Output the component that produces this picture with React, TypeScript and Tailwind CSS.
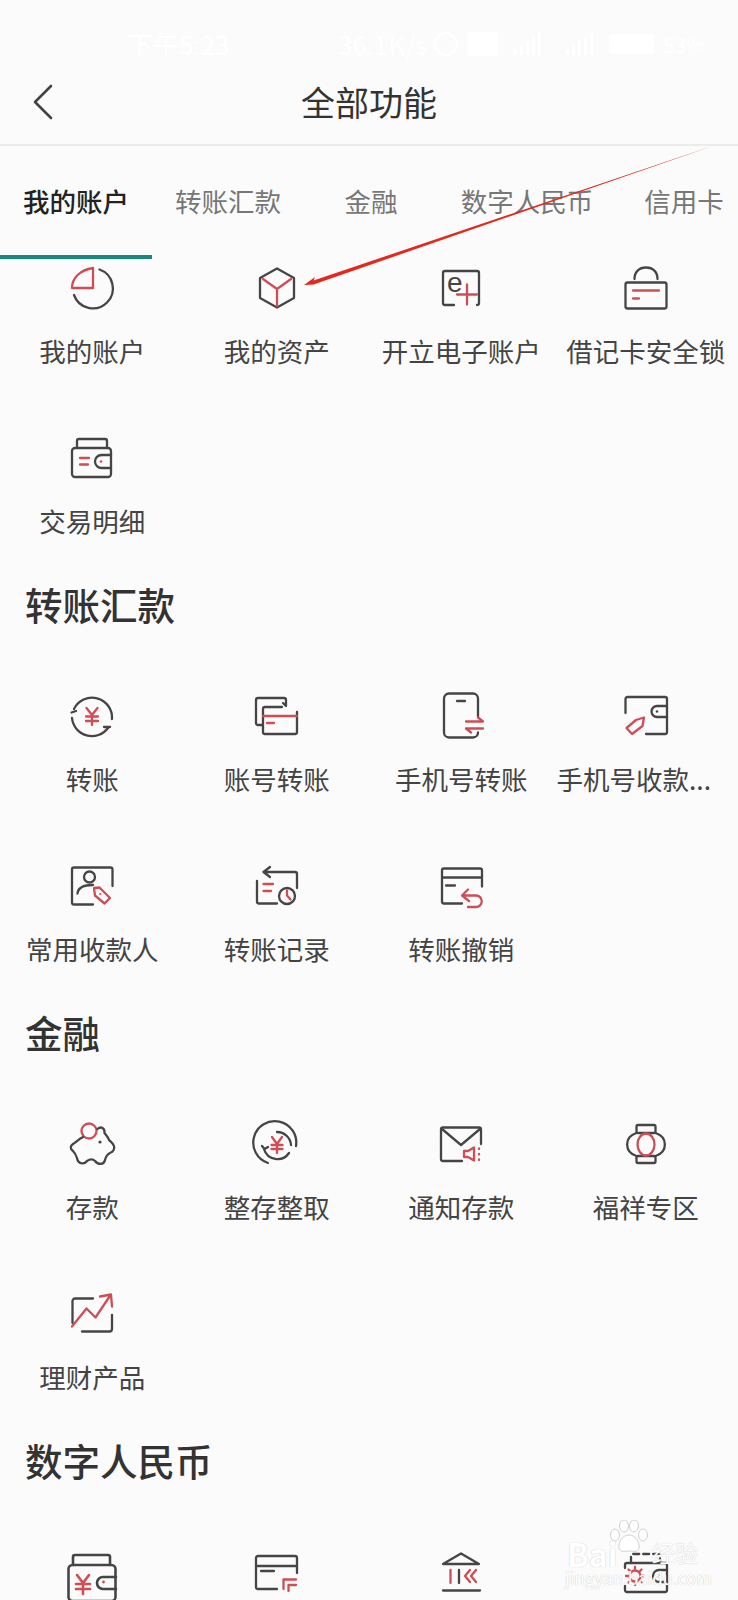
import React from "react";

const D = "#454545";
const R = "#cf4d55";

type IconProps = { children: React.ReactNode };

// every icon is drawn on a 48px box, 1:1 with the page
function Ico({ children }: IconProps) {
  return (
    <svg
      width="48"
      height="48"
      viewBox="0 0 48 48"
      fill="none"
      strokeWidth="2.3"
      strokeLinecap="round"
      strokeLinejoin="round"
      className="shrink-0 overflow-visible"
    >
      {children}
    </svg>
  );
}

const icons: Record<string, React.ReactNode> = {
  pie: (
    <Ico>
      <path d="M25 4V24H4C4 14 12 6 25 4Z" stroke={R} />
      <path d="M31.5 5.5A20 20 0 1 1 6 31" stroke={D} />
    </Ico>
  ),
  cube: (
    <Ico>
      <path d="M24 4.5L41 14V34L24 43.5L7 34V14Z" stroke={D} />
      <path d="M10 15L24 25L38 15M24 25V42" stroke={R} />
    </Ico>
  ),
  eplus: (
    <Ico>
      <path d="M17 41H8A2 2 0 0 1 6 39V9A2 2 0 0 1 8 7H40A2 2 0 0 1 42 9V39A2 2 0 0 1 40 41" stroke={D} />
      <text x="10" y="28" fontSize="28" fill={D} fontFamily="Liberation Sans, sans-serif">e</text>
      <path d="M20 30.5H40M30 20.5V40.5" stroke={R} />
    </Ico>
  ),
  lock: (
    <Ico>
      <rect x="3.5" y="18.5" width="41" height="26" rx="2" stroke={D} />
      <path d="M12.5 15C12.5 8 17 3.5 24 3.5S35.5 8 35.5 15" stroke={D} />
      <path d="M11 26.5H37M11 34.5H17" stroke={R} />
    </Ico>
  ),
  wallet: (
    <Ico>
      <path d="M9 14V7A2 2 0 0 1 11 5H37A2 2 0 0 1 39 7V14" stroke={D} />
      <rect x="4" y="14" width="39" height="29" rx="3" stroke={D} />
      <path d="M43 21H33.5A6.5 6.5 0 0 0 33.5 34H43" stroke={D} />
      <circle cx="33" cy="27.5" r="1.3" fill={R} />
      <path d="M12 24H21M12 30.5H20" stroke={R} />
    </Ico>
  ),
  yenCycle: (
    <Ico>
      <path d="M6 17A20 20 0 0 1 44 27" stroke={D} />
      <path d="M4 26A20 20 0 0 0 40 36" stroke={D} />
      <path d="M3.5 20.5L8 19M36 35H42" stroke={D} />
      <path d="M18.5 16L24 23L29.5 16M24 23V33M18 24.5H30M18 29H30" stroke={R} />
    </Ico>
  ),
  cards: (
    <Ico>
      <path d="M9 33H5A2 2 0 0 1 3 31V8A2 2 0 0 1 5 6H31A2 2 0 0 1 33 8V14L30 11" stroke={D} />
      <path d="M29 15H12A2 2 0 0 0 10 17V40A2 2 0 0 0 12 42H42A2 2 0 0 0 44 40V20" stroke={D} />
      <path d="M10 24H44M14 31H21" stroke={R} />
    </Ico>
  ),
  phone: (
    <Ico>
      <path d="M41 25V6.5A5 5 0 0 0 36 1.5H12A5 5 0 0 0 7 6.5V40.5A5 5 0 0 0 12 45.5H36A5 5 0 0 0 41 40.5" stroke={D} />
      <path d="M20 9H28" stroke={D} />
      <path d="M29 29.5H46L41 25.5M46 36.5H29L34 40.5" stroke={R} />
    </Ico>
  ),
  walletTag: (
    <Ico>
      <path d="M3.5 21V7A2 2 0 0 1 5.5 5H43A2 2 0 0 1 45 7V40A2 2 0 0 1 43 42H24" stroke={D} />
      <path d="M45 14H35A5.5 5.5 0 0 0 35 25H45" stroke={D} />
      <circle cx="35" cy="19.5" r="1.2" fill={D} />
      <path d="M22 25.5L20.5 34L10 42L4.5 36L14 28Z" stroke={R} />
    </Ico>
  ),
  payee: (
    <Ico>
      <path d="M44.5 24V7.5A2 2 0 0 0 42.5 5.5H6A2 2 0 0 0 4 7.5V40.5A2 2 0 0 0 6 42.5H25" stroke={D} />
      <circle cx="21.5" cy="15" r="5.5" stroke={D} />
      <path d="M9.5 31.5C10 26 15 23 25 23" stroke={D} />
      <path d="M26 26L31.5 25.5L42 36L36.5 41.5L27 33.5Z" stroke={R} />
      <circle cx="32.3" cy="32" r="1.1" fill={R} />
    </Ico>
  ),
  record: (
    <Ico>
      <path d="M17 5L10.5 10L17 15M10.5 10H42A2 2 0 0 1 44 12V26" stroke={D} />
      <path d="M4 19V39.5A2 2 0 0 0 6 41.5H24" stroke={D} />
      <circle cx="34" cy="34" r="8" stroke={D} />
      <path d="M10.5 22H20M10.5 29H18M34 28.5V33.5L37.5 37.5" stroke={R} />
    </Ico>
  ),
  undo: (
    <Ico>
      <path d="M45 24.5V8.5A2 2 0 0 0 43 6.5H7A2 2 0 0 0 5 8.5V39.5A2 2 0 0 0 7 41.5H25M5 15.5H45M9 23.5H18" stroke={D} />
      <path d="M31 27.5L25 33.5L32 39M25 33.5H39A5.75 5.75 0 0 1 39 45H31" stroke={R} />
    </Ico>
  ),
  piggy: (
    <Ico>
      <circle cx="21" cy="11" r="7.5" stroke={R} />
      <path
        d="M15 17C11 19 8 22 5 24C2 26 2 29 5 31C7 33 8 35 9 38C10 44 16 45 19 41C22 39 25 39 27 41C30 45 36 45 37 40C38 36 40 34 42 33C45 32 47 29 46 26C45 23 43 22 41 20C40 17 38 15 36.5 13C37 8 33 6 29.5 9"
        stroke={D}
      />
      <circle cx="32" cy="22" r="1.6" fill={D} />
    </Ico>
  ),
  yenSpin: (
    <Ico>
      <path d="M15 43A21.5 21.5 0 1 1 43 26" stroke={D} />
      <path d="M24 12A14 14 0 0 1 38 25M11 29A14 14 0 0 0 36 33M9 26L11.5 29L15 27" stroke={D} />
      <path d="M19 17L24 24L29 17M24 24V33M18.5 25H29.5M18.5 29H29.5" stroke={R} />
    </Ico>
  ),
  notice: (
    <Ico>
      <path d="M44 24V9.5A2 2 0 0 0 42 7.5H6A2 2 0 0 0 4 9.5V39A2 2 0 0 0 6 41H25" stroke={D} />
      <path d="M5 9L24 25L43 9" stroke={D} />
      <path d="M27 31H31L37 27.5V40.5L31 37H27ZM42 28.5V29M42 34V34.5M42 39.5V40" stroke={R} />
    </Ico>
  ),
  lantern: (
    <Ico>
      <rect x="14.5" y="5" width="19" height="8" rx="1.5" stroke={D} />
      <rect x="14.5" y="36" width="19" height="7" rx="1.5" stroke={D} />
      <path d="M14.5 13C2 17 2 32 14.5 36M33.5 13C46 17 46 32 33.5 36" stroke={D} />
      <ellipse cx="24" cy="24.5" rx="8.5" ry="11" stroke={R} />
    </Ico>
  ),
  chart: (
    <Ico>
      <path d="M4.5 33V11A2.5 2.5 0 0 1 7 8.5H25M44 25V39A2.5 2.5 0 0 1 41.5 41.5H14" stroke={D} />
      <path d="M4 36.5L18.5 18.5L27.5 27.5L42.5 5M32 6.5L43 4.5L44 16.5" stroke={R} />
    </Ico>
  ),
  cash: (
    <Ico>
      <path d="M5 17V9A2 2 0 0 1 7 7H40A2 2 0 0 1 42 9V17" stroke={D} strokeWidth="2.6" />
      <rect x="0.5" y="17" width="47" height="36" rx="4" stroke={D} strokeWidth="2.6" />
      <path d="M48 29H35A6 6 0 0 0 35 41H48" stroke={D} strokeWidth="2.6" />
      <circle cx="35.5" cy="34" r="1.4" fill={R} />
      <path d="M9 27L15 35L21 27M15 35V46M8 36H22M8 41H22" stroke={R} strokeWidth="2.6" />
    </Ico>
  ),
  cardCorner: (
    <Ico>
      <path d="M44 25V10A2 2 0 0 0 42 8H5A2 2 0 0 0 3 10V39A2 2 0 0 0 5 41H24M3 18H44M8 23H21" stroke={D} />
      <path d="M30.5 41V31.5H43M35.5 43V37H43" stroke={R} />
    </Ico>
  ),
  bank: (
    <Ico>
      <path d="M6 16L24 5.5L42 16ZM6 42.5H43M22 22V35" stroke={D} />
      <path d="M13.5 22V35M33 22L28 28L33 34M39 22L34 28L39 34" stroke={R} />
    </Ico>
  ),
  walletSun: (
    <Ico>
      <path d="M9 15V8A2 2 0 0 1 11 6H36A2 2 0 0 1 38 8V15" stroke={D} strokeDasharray="6 4" />
      <path d="M3 20V17A2 2 0 0 1 5 15H43A2 2 0 0 1 45 17V42A2 2 0 0 1 43 44H5A2 2 0 0 1 3 42V38" stroke={D} />
      <path d="M45 22H37A6 6 0 0 0 37 34H45" stroke={D} />
      <circle cx="37" cy="28" r="1.2" fill={D} />
      <circle cx="13" cy="28" r="5.5" stroke={R} />
      <path d="M13 19V21M13 35V37M4 28H6M20 28H22M6.5 21.5L8 23M18 33L19.5 34.5M6.5 34.5L8 33M18 23L19.5 21.5" stroke={R} />
    </Ico>
  ),
};

type Item = { label?: string; icon: string; shift?: boolean };
type Section = { title?: string; items: Item[] };

const sections: Section[] = [
  {
    items: [
      { label: "我的账户", icon: "pie" },
      { label: "我的资产", icon: "cube" },
      { label: "开立电子账户", icon: "eplus" },
      { label: "借记卡安全锁", icon: "lock" },
      { label: "交易明细", icon: "wallet" },
    ],
  },
  {
    title: "转账汇款",
    items: [
      { label: "转账", icon: "yenCycle" },
      { label: "账号转账", icon: "cards" },
      { label: "手机号转账", icon: "phone" },
      { label: "手机号收款...", icon: "walletTag", shift: true },
      { label: "常用收款人", icon: "payee" },
      { label: "转账记录", icon: "record" },
      { label: "转账撤销", icon: "undo" },
    ],
  },
  {
    title: "金融",
    items: [
      { label: "存款", icon: "piggy" },
      { label: "整存整取", icon: "yenSpin" },
      { label: "通知存款", icon: "notice" },
      { label: "福祥专区", icon: "lantern" },
      { label: "理财产品", icon: "chart" },
    ],
  },
  {
    // labels of this row are below the fold
    title: "数字人民币",
    items: [{ icon: "cash" }, { icon: "cardCorner" }, { icon: "bank" }, { icon: "walletSun" }],
  },
];

const tabs = [
  { label: "我的账户", width: "w-[152px]", active: true },
  { label: "转账汇款", width: "w-[152px]" },
  { label: "金融", width: "w-[134px]" },
  { label: "数字人民币", width: "w-[178px]" },
  { label: "信用卡", width: "w-[136px]" },
];

function Bars() {
  return (
    <div className="flex h-[22px] w-[36px] items-end gap-[3px]">
      <div className="h-[6px] w-[3px] bg-white" />
      <div className="h-[10px] w-[3px] bg-white" />
      <div className="h-[14px] w-[3px] bg-white" />
      <div className="h-[18px] w-[3px] bg-white" />
      <div className="h-[22px] w-[3px] bg-white" />
    </div>
  );
}

function StatusBar() {
  return (
    <div className="flex h-[60px] shrink-0 justify-between pl-[127px] pr-[32px] pt-[28px] text-[26px] leading-[32px] text-white">
      <span>下午5:23</span>
      <div className="flex items-center">
        <span className="w-[96px]">36.1K/s</span>
        <div className="h-[24px] w-[24px] rounded-full border-2 border-white" />
        <div className="ml-[9px] h-[24px] w-[31px] rounded-[3px] bg-white" />
        <div className="ml-[16px]">
          <Bars />
        </div>
        <div className="ml-[16px]">
          <Bars />
        </div>
        <div className="ml-[7px] h-[20px] w-[45px] rounded-[3px] border-2 border-white bg-white" />
        <span className="ml-[9px] w-[43px] text-[21px]">53%</span>
      </div>
    </div>
  );
}

function NavBar() {
  return (
    <div className="relative flex h-[86px] shrink-0 items-center justify-center border-b-2 border-[#ececec]">
      <button className="absolute left-[32px] top-[24px]">
        <svg width="22" height="36" viewBox="0 0 22 36" fill="none" stroke="#444" strokeWidth="2.6" strokeLinecap="round" strokeLinejoin="round">
          <path d="M19 2L3 18L19 34" />
        </svg>
      </button>
      <span className="text-[34px] leading-[44px] text-[#333]">全部功能</span>
    </div>
  );
}

function TabBar() {
  return (
    <div className="relative z-10 flex h-[113px] shrink-0 bg-[#fbfbfb]">
      {tabs.map((t) => (
        <div
          key={t.label}
          className={`${t.width} relative flex shrink-0 justify-center pt-[39px] text-[26.5px] leading-[32px] ${
            t.active ? "font-medium text-[#222]" : "text-[#777]"
          }`}
        >
          {t.label}
          {t.active && <div className="absolute bottom-0 left-0 h-[4px] w-full bg-[#17897f]" />}
        </div>
      ))}
    </div>
  );
}

function Watermark() {
  return (
    <div className="pointer-events-none absolute left-[565px] top-[1520px] z-20 h-[64px] w-[134px] text-white [text-shadow:0_0_1px_#b5b5b5]">
      <svg width="42" height="34" viewBox="0 0 42 34" className="absolute left-[42px] top-0" fill="#fff" stroke="#d0d0d0" strokeWidth="1">
        <ellipse cx="8" cy="15" rx="4.5" ry="6" />
        <ellipse cx="17" cy="6" rx="4.5" ry="6" />
        <ellipse cx="27" cy="6" rx="4.5" ry="6" />
        <ellipse cx="36" cy="15" rx="4.5" ry="6" />
        <path d="M22 15C15 15 11 23 12 28C13 33 19 31 22 31C25 31 31 33 32 28C33 23 29 15 22 15Z" />
      </svg>
      <span className="absolute left-[2px] top-[19px] text-[32px] font-bold leading-[28px]">Bai</span>
      <span className="absolute left-[87px] top-[18px] text-[23px] leading-[28px]">经验</span>
      <span className="absolute left-0 top-[49px] text-[17px] leading-[18px]">jingyan.baidu.com</span>
    </div>
  );
}

export default function App() {
  return (
    <div className="relative flex h-[1600px] w-[738px] flex-col overflow-hidden bg-[#fbfbfb] font-['Noto_Sans_CJK_SC','Noto_Sans',sans-serif]">
      <StatusBar />
      <NavBar />
      <TabBar />

      {/* list is scrolled a little under the tabs */}
      <div className="-mt-[28px]">
        {sections.map((s, i) => (
          <div key={i}>
            {s.title && (
              <div className="pl-[25px] pt-[13px] pb-[35px] text-[37.5px] font-medium leading-[40px] text-[#333]">
                {s.title}
              </div>
            )}
            <div className="grid grid-cols-4 auto-rows-[170px]">
              {s.items.map((item) => (
                <div key={item.icon} className="flex flex-col items-center pt-[33px]">
                  {icons[item.icon]}
                  {item.label && (
                    <span
                      className={`mt-[24px] whitespace-nowrap text-[26.5px] leading-[30px] text-[#444] ${
                        item.shift ? "pr-[24px]" : ""
                      }`}
                    >
                      {item.label}
                    </span>
                  )}
                </div>
              ))}
            </div>
          </div>
        ))}
      </div>

      {/* red arrow drawn on top of the screenshot */}
      <svg width="738" height="300" className="pointer-events-none absolute left-0 top-0 z-20">
        <polygon points="304,285 315,277 313.5,280.5 714,145.5 315,284 314,284.5" fill="#e3281e" />
      </svg>

      <Watermark />
    </div>
  );
}
